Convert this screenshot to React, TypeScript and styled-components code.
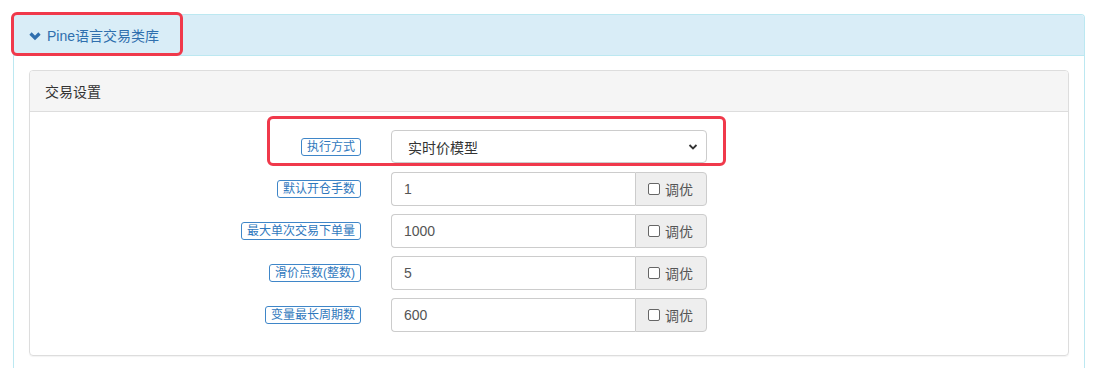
import * as React from "react";
import styled, { createGlobalStyle } from "styled-components";

const GlobalStyle = createGlobalStyle`
  html, body {
    margin: 0;
    padding: 0;
    background: #fff;
    font-family: "Liberation Sans", "Noto Sans CJK SC", sans-serif;
    font-size: 14px;
    color: #333;
  }
  * { box-sizing: border-box; }
`;

const fields = [
  { label: "默认开仓手数", value: "1" },
  { label: "最大单次交易下单量", value: "1000" },
  { label: "滑价点数(整数)", value: "5" },
  { label: "变量最长周期数", value: "600" },
];

export default function App() {
  return (
    <Page>
      <GlobalStyle />
      <OuterPanel>
        <OuterHeading>
          <Chevron width="12" height="10" viewBox="0 0 12 10">
            <polyline points="1.5,2.5 6,7 10.5,2.5" fill="none" stroke="#2f6fae" strokeWidth="3.2" />
          </Chevron>
          Pine语言交易类库
          <Highlight style={{ left: -3, top: -3, width: 172, height: 44 }} />
        </OuterHeading>
        <OuterBody>
          <InnerPanel>
            <InnerHeading>交易设置</InnerHeading>
            <Form>
              <Row>
                <LabelCell>
                  <Badge>执行方式</Badge>
                </LabelCell>
                <FieldCell>
                  <Select>
                    <span>实时价模型</span>
                    <svg width="10" height="8" viewBox="0 0 10 8">
                      <polyline points="1.5,2 5,5.5 8.5,2" fill="none" stroke="#333" strokeWidth="1.8" />
                    </svg>
                  </Select>
                </FieldCell>
                <Highlight style={{ left: 237, top: -14, width: 459, height: 50 }} />
              </Row>
              {fields.map(f => (
                <Row key={f.label}>
                  <LabelCell>
                    <Badge>{f.label}</Badge>
                  </LabelCell>
                  <FieldCell>
                    <InputGroup>
                      <Input>{f.value}</Input>
                      <Addon>
                        <CheckBox />
                        调优
                      </Addon>
                    </InputGroup>
                  </FieldCell>
                </Row>
              ))}
            </Form>
          </InnerPanel>
        </OuterBody>
      </OuterPanel>
    </Page>
  );
}

const Page = styled.div`
  padding: 14px 28px 0 13px;
`;

const OuterPanel = styled.div`
  border: 1px solid #bce8f1;
  border-bottom: none;
  border-radius: 4px 4px 0 0;
  height: 360px;
`;

const OuterHeading = styled.div`
  position: relative;
  display: flex;
  align-items: center;
  height: 41px;
  padding: 0 15px;
  background: #d9edf7;
  border-bottom: 1px solid #bce8f1;
  color: #2f6fae;
  font-size: 14px;
  border-radius: 3px 3px 0 0;
`;

const Chevron = styled.svg`
  margin-right: 6px;
  margin-top: 1px;
`;

const Highlight = styled.div`
  position: absolute;
  border: 3px solid #f0394b;
  border-radius: 6px;
  pointer-events: none;
`;

const OuterBody = styled.div`
  padding: 14px 15px 0 15px;
`;

const InnerPanel = styled.div`
  border: 1px solid #ddd;
  border-radius: 4px;
  box-shadow: 0 1px 1px rgba(0, 0, 0, 0.05);
`;

const InnerHeading = styled.div`
  display: flex;
  align-items: center;
  height: 41px;
  padding: 0 15px;
  background: #f5f5f5;
  border-bottom: 1px solid #ddd;
  border-radius: 3px 3px 0 0;
  color: #333;
`;

const Form = styled.div`
  display: flex;
  flex-direction: column;
  gap: 8px;
  padding: 18px 0 23px;
`;

const Row = styled.div`
  position: relative;
  display: grid;
  grid-template-columns: 346px 346px;
  height: 34px;
`;

const LabelCell = styled.div`
  display: flex;
  justify-content: flex-end;
  align-items: center;
  padding-right: 15px;
`;

const Badge = styled.span`
  display: inline-flex;
  align-items: center;
  height: 18px;
  padding: 0 5px;
  border: 1px solid #3f86c8;
  border-radius: 3px;
  color: #2f78bd;
  font-size: 12px;
  line-height: 1;
`;

const FieldCell = styled.div`
  padding: 0 15px;
`;

const Select = styled.div`
  display: flex;
  align-items: center;
  justify-content: space-between;
  height: 33px;
  padding: 0 8px 0 16px;
  border: 1px solid #ccc;
  border-radius: 4px;
  color: #333;
  background: #fff;
`;

const InputGroup = styled.div`
  display: flex;
  height: 34px;
`;

const Input = styled.div`
  flex: 1;
  display: flex;
  align-items: center;
  padding: 0 12px;
  border: 1px solid #ccc;
  border-right: none;
  border-radius: 4px 0 0 4px;
  color: #555;
`;

const Addon = styled.div`
  display: flex;
  align-items: center;
  gap: 5px;
  width: 72px;
  padding: 0 12px;
  background: #eee;
  border: 1px solid #ccc;
  border-radius: 0 4px 4px 0;
  color: #555;
`;

const CheckBox = styled.span`
  width: 12px;
  height: 12px;
  border: 1px solid #666;
  border-radius: 2px;
  background: #fff;
`;
